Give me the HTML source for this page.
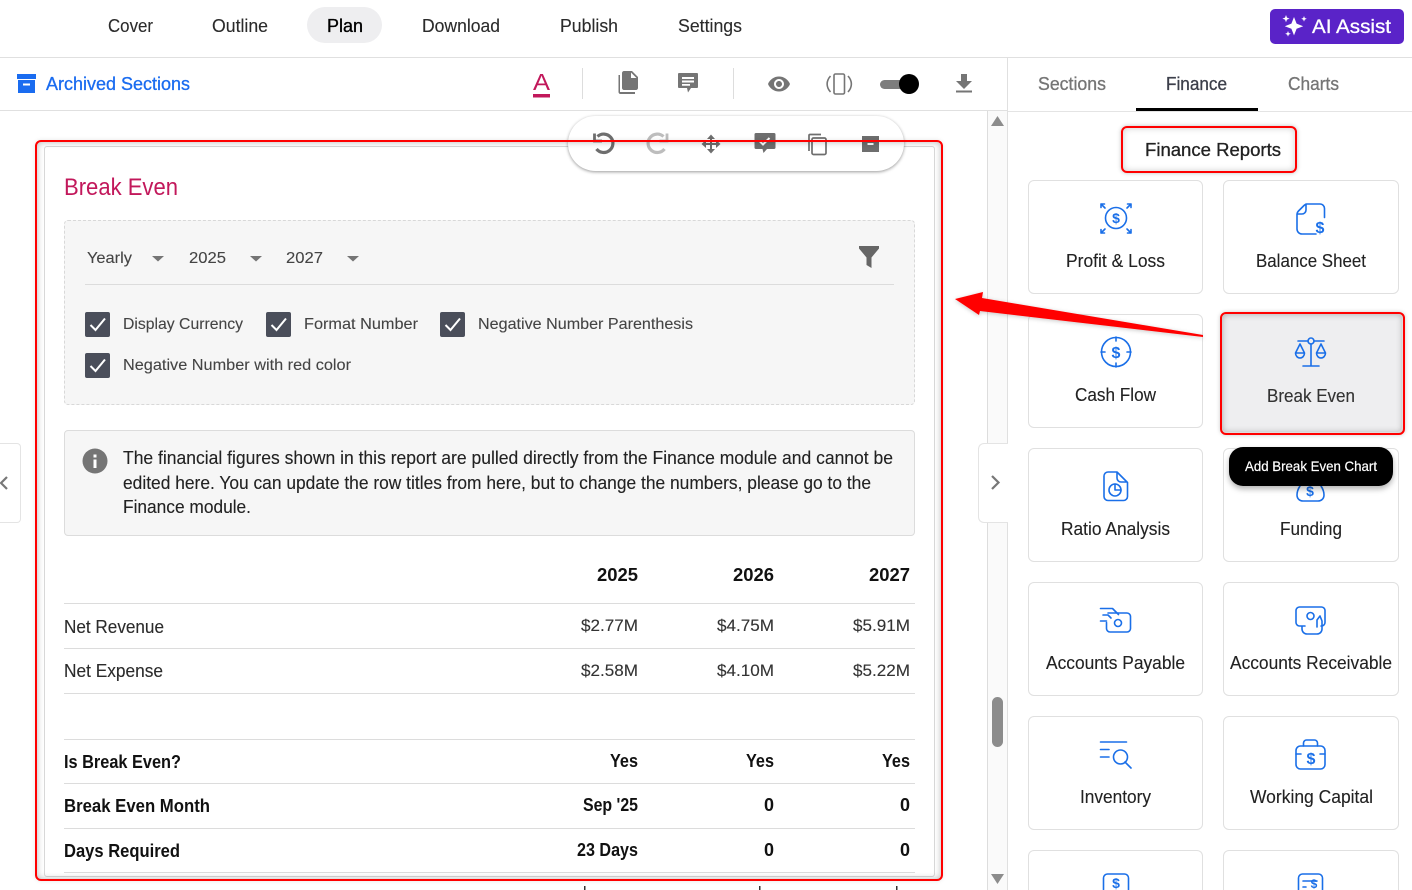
<!DOCTYPE html>
<html lang="en"><head><meta charset="utf-8"><title>Break Even</title>
<style>
html,body{margin:0;padding:0;background:#fff;width:1412px;height:890px;overflow:hidden}
#p{width:1412px;height:890px;position:relative;overflow:hidden;font-family:"Liberation Sans",Arial,sans-serif}
.b{position:absolute;box-sizing:border-box}
.card{position:absolute;box-sizing:border-box;width:175px;height:114px;border:1px solid #e0e0e0;border-radius:6px;background:#fff}
.cut{height:40px;border-bottom:none;border-radius:6px 6px 0 0}
svg{position:absolute;left:0;top:0}
text{font-family:"Liberation Sans",Arial,sans-serif;white-space:pre}
.m{stroke:currentColor;stroke-width:.3}
.ic{fill:none;stroke:#1a6fe8;stroke-width:1.6;stroke-linecap:round;stroke-linejoin:round}
.d{fill:#1a6fe8;font-weight:700;font-size:14px;text-anchor:middle}
.n{font-size:18px;fill:#2b2b2b;stroke:#2b2b2b;stroke-width:.12}
.v{font-size:17px;fill:#333;stroke:#333;stroke-width:.12}
.t{font-size:18px;font-weight:700;fill:#111}
.l{font-size:16px;fill:#444;stroke:#444;stroke-width:.1}
.c{font-size:18px;fill:#222;stroke:#222;stroke-width:.12}
.g{fill:#757575}
.r{position:absolute;box-sizing:border-box;border:2px solid #f00;border-radius:6px}
</style></head><body><div id="p">

<div class="b" style="left:0;top:57px;width:1412px;height:1px;background:#e0e0e0"></div>
<div class="b" style="left:0;top:110px;width:1008px;height:1px;background:#e0e0e0"></div>
<div class="b" style="left:1008px;top:111px;width:404px;height:1px;background:#e4e4e4"></div>
<div class="b" style="left:1007px;top:58px;width:1px;height:832px;background:#e0e0e0"></div>
<div class="b" style="left:987px;top:111px;width:20px;height:779px;background:#fafafa;border-left:1px solid #ddd"></div>
<div class="b" style="left:992px;top:697px;width:11px;height:50px;background:#8c8c8c;border-radius:6px"></div>

<div class="b" style="left:307px;top:7px;width:75px;height:36px;background:#eeeef0;border-radius:18px"></div>
<div class="b" style="left:1270px;top:9px;width:134px;height:35px;background:#5a23c8;border-radius:5px"></div>
<div class="b" style="left:1136px;top:108px;width:122px;height:3px;background:#000"></div>

<div class="b" style="left:44px;top:146px;width:891px;height:731px;background:#fff;border:1px solid #d8d8d8;border-radius:3px"></div>
<div class="b" style="left:64px;top:220px;width:851px;height:185px;background:#f6f6f6;border:1px dashed #d8d8d8;border-radius:4px"></div>
<div class="b" style="left:85px;top:284px;width:809px;height:1px;background:#dcdcdc"></div>
<div class="b" style="left:64px;top:430px;width:851px;height:106px;background:#f6f6f6;border:1px solid #dcdcdc;border-radius:4px"></div>
<div class="b" style="left:64px;top:603px;width:851px;height:1px;background:#dcdcdc"></div>
<div class="b" style="left:64px;top:648px;width:851px;height:1px;background:#dcdcdc"></div>
<div class="b" style="left:64px;top:693px;width:851px;height:1px;background:#dcdcdc"></div>
<div class="b" style="left:64px;top:739px;width:851px;height:1px;background:#dcdcdc"></div>
<div class="b" style="left:64px;top:783px;width:851px;height:1px;background:#dcdcdc"></div>
<div class="b" style="left:64px;top:828px;width:851px;height:1px;background:#dcdcdc"></div>
<div class="b" style="left:64px;top:872px;width:851px;height:1px;background:#dcdcdc"></div>

<div class="b" style="left:568px;top:116px;width:336px;height:55px;background:#fff;border-radius:28px;box-shadow:0 1px 3px rgba(0,0,0,.4)"></div>

<div class="b" style="left:0;top:443px;width:21px;height:80px;background:#fff;border:1px solid #e4e4e4;border-left:none;border-radius:0 4px 4px 0"></div>
<div class="b" style="left:978px;top:443px;width:30px;height:80px;background:#fff;border:1px solid #e4e4e4;border-right:none;border-radius:6px 0 0 6px"></div>

<div class="card" style="left:1028px;top:180px"></div>
<div class="card" style="left:1223px;top:180px;width:176px"></div>
<div class="card" style="left:1028px;top:314px"></div>
<div class="b" style="left:1222px;top:314px;width:180px;height:118px;background:#eeeef0;border-radius:5px"></div>
<div class="card" style="left:1028px;top:448px"></div>
<div class="card" style="left:1223px;top:448px;width:176px"></div>
<div class="card" style="left:1028px;top:582px"></div>
<div class="card" style="left:1223px;top:582px;width:176px"></div>
<div class="card" style="left:1028px;top:716px"></div>
<div class="card" style="left:1223px;top:716px;width:176px"></div>
<div class="card cut" style="left:1028px;top:850px"></div>
<div class="card cut" style="left:1223px;top:850px;width:176px"></div>

<svg width="1412" height="890" viewBox="0 0 1412 890" xmlns="http://www.w3.org/2000/svg">
<defs>
<filter id="sh" x="-20%" y="-50%" width="140%" height="220%"><feDropShadow dx="0" dy="3" stdDeviation="3" flood-color="#000" flood-opacity=".3"/></filter>
</defs>

<!-- top nav -->
<text class="n" x="108" y="32" textLength="45" lengthAdjust="spacingAndGlyphs">Cover</text>
<text class="n" x="212" y="32" textLength="56" lengthAdjust="spacingAndGlyphs">Outline</text>
<text class="n m" style="fill:#000;stroke:#000;stroke-width:.35" x="327" y="32" textLength="36" lengthAdjust="spacingAndGlyphs">Plan</text>
<text class="n" x="422" y="32" textLength="78" lengthAdjust="spacingAndGlyphs">Download</text>
<text class="n" x="560" y="32" textLength="58" lengthAdjust="spacingAndGlyphs">Publish</text>
<text class="n" x="678" y="32" textLength="64" lengthAdjust="spacingAndGlyphs">Settings</text>

<!-- AI assist -->
<path fill="#fff" d="M1294 17l2.6 6.6 6.6 2.6-6.6 2.600-2.600 6.600-2.600-6.600-6.600-2.600 6.600-2.600zM1286 15l1 2.600 2.600 1-2.600 1-1 2.600-1-2.600-2.600-1 2.600-1zM1304 16l.8 2 2 .8-2 .8-.8 2-.8-2-2-.8 2-.8zM1288 31l.8 2 2 .8-2 .8-.8 2-.8-2-2-.8 2-.8z"/>
<text x="1312" y="33" font-size="19" fill="#fff" class="m" style="color:#fff" textLength="79" lengthAdjust="spacingAndGlyphs">AI Assist</text>

<!-- toolbar -->
<path fill="#1a6cf0" d="M17 74h19v5H17zM18 80h17v13H18zM23 83.500v2h7v-2z" fill-rule="evenodd"/>
<text class="m" x="46" y="90" font-size="18" fill="#1a6cf0" style="color:#1a6cf0" textLength="144" lengthAdjust="spacingAndGlyphs">Archived Sections</text>
<text x="533" y="90" font-size="23" fill="#c2185b" textLength="17" lengthAdjust="spacingAndGlyphs">A</text>
<rect x="533" y="94" width="17" height="3.500" fill="#c2185b"/>
<rect x="582" y="68" width="1" height="31" fill="#ddd"/>
<rect x="733" y="68" width="1" height="31" fill="#ddd"/>
<path class="g" transform="translate(616,70)" d="M16 1H8c-1.100 0-2 .9-2 2v15c0 1.100.9 2 2 2h12c1.100 0 2-.9 2-2V7zM15 8V2.500L20.500 8zM4 5H2.500v17c0 1 .8 2 2 2H19v-2H4z"/>
<path class="g" fill-rule="evenodd" d="M679 73h18a1 1 0 011 1v13a1 1 0 01-1 1h-6l-3 4.500-1-4.500h-8a1 1 0 01-1-1V74a1 1 0 011-1zM682 77v2h12v-2zM682 80.500v2h12v-2zM682 84v1.800h8V84z"/>
<path class="g" transform="translate(767,72)" d="M12 4.500C7 4.500 2.730 7.610 1 12c1.730 4.390 6 7.500 11 7.500s9.270-3.110 11-7.500c-1.730-4.390-6-7.500-11-7.500zM12 17c-2.760 0-5-2.240-5-5s2.240-5 5-5 5 2.240 5 5-2.240 5-5 5zm0-8c-1.660 0-3 1.340-3 3s1.340 3 3 3 3-1.340 3-3-1.340-3-3-3z"/>
<g fill="none" stroke="#757575" stroke-width="1.600"><rect x="834" y="74" width="10.500" height="20" rx="1.500"/><path d="M830.500 76c-4.500 5-4.500 11 0 16M848 76c4.500 5 4.500 11 0 16"/></g>
<rect x="880" y="80" width="26" height="9" rx="4.500" fill="#7d7d7d"/>
<circle cx="909" cy="84" r="10" fill="#000"/>
<path class="g" d="M961 74h6v7h5l-8 8-8-8h5zM956 90.500h16v2h-16z"/>

<!-- tabs -->
<text class="m" x="1038" y="90" font-size="18" fill="#757575" style="color:#757575" textLength="68" lengthAdjust="spacingAndGlyphs">Sections</text>
<text class="m" x="1166" y="90" font-size="18" fill="#3c3f4a" style="color:#3c3f4a" textLength="61" lengthAdjust="spacingAndGlyphs">Finance</text>
<text class="m" x="1288" y="90" font-size="18" fill="#757575" style="color:#757575" textLength="51" lengthAdjust="spacingAndGlyphs">Charts</text>
<text class="m" x="1145" y="156" font-size="18" fill="#222" style="color:#222" textLength="136" lengthAdjust="spacingAndGlyphs">Finance Reports</text>

<!-- scrollbar arrows -->
<path d="M997.500 116l6.500 10h-13z" fill="#8c8c8c"/>
<path d="M997.500 884l-6.500-10h13z" fill="#8c8c8c"/>

<!-- side chevrons -->
<path d="M7 477l-6 6 6 6" fill="none" stroke="#777" stroke-width="2.200"/>
<path d="M992 476l6.500 6.500-6.500 6.500" fill="none" stroke="#777" stroke-width="2.200"/>

<!-- title -->
<text x="64" y="195" font-size="24" fill="#c2185b" textLength="114" lengthAdjust="spacingAndGlyphs">Break Even</text>

<!-- filters -->
<text class="l" x="87" y="263" textLength="45" lengthAdjust="spacingAndGlyphs">Yearly</text>
<text class="l" x="189" y="263" textLength="37" lengthAdjust="spacingAndGlyphs">2025</text>
<text class="l" x="286" y="263" textLength="37" lengthAdjust="spacingAndGlyphs">2027</text>
<path d="M152 256h12l-6 5.500zM250 256h12l-6 5.500zM347 256h12l-6 5.500z" fill="#757575"/>
<path d="M859 246h20v2.500l-7.500 9v10.500l-5-3v-7.500l-7.500-9z" fill="#666"/>

<g fill="#4a4e5a">
<rect x="85" y="312" width="25" height="25" rx="2"/><rect x="266" y="312" width="25" height="25" rx="2"/><rect x="440" y="312" width="25" height="25" rx="2"/><rect x="85" y="353" width="25" height="25" rx="2"/>
</g>
<g fill="none" stroke="#fff" stroke-width="2">
<path d="M90.500 325l5 5 9.500-11.500M271.500 325l5 5 9.500-11.500M445.500 325l5 5 9.500-11.500M90.500 366l5 5 9.500-11.500"/>
</g>
<text class="l" x="123" y="329" textLength="120" lengthAdjust="spacingAndGlyphs">Display Currency</text>
<text class="l" x="304" y="329" textLength="114" lengthAdjust="spacingAndGlyphs">Format Number</text>
<text class="l" x="478" y="329" textLength="215" lengthAdjust="spacingAndGlyphs">Negative Number Parenthesis</text>
<text class="l" x="123" y="370" textLength="228" lengthAdjust="spacingAndGlyphs">Negative Number with red color</text>

<!-- info -->
<circle cx="95" cy="461" r="12.500" fill="#757575"/>
<rect x="93.500" y="459.500" width="3" height="8.500" fill="#fff"/><rect x="93.500" y="454.500" width="3" height="3" fill="#fff"/>
<text class="c" x="123" y="464" textLength="770" lengthAdjust="spacingAndGlyphs">The financial figures shown in this report are pulled directly from the Finance module and cannot be</text>
<text class="c" x="123" y="489" textLength="748" lengthAdjust="spacingAndGlyphs">edited here. You can update the row titles from here, but to change the numbers, please go to the</text>
<text class="c" x="123" y="513" textLength="128" lengthAdjust="spacingAndGlyphs">Finance module.</text>

<!-- table -->
<text class="t" x="597" y="581" textLength="41" lengthAdjust="spacingAndGlyphs">2025</text>
<text class="t" x="733" y="581" textLength="41" lengthAdjust="spacingAndGlyphs">2026</text>
<text class="t" x="869" y="581" textLength="41" lengthAdjust="spacingAndGlyphs">2027</text>
<text class="n" x="64" y="633" textLength="100" lengthAdjust="spacingAndGlyphs">Net Revenue</text>
<text class="v" x="581" y="631" textLength="57" lengthAdjust="spacingAndGlyphs">$2.77M</text>
<text class="v" x="717" y="631" textLength="57" lengthAdjust="spacingAndGlyphs">$4.75M</text>
<text class="v" x="853" y="631" textLength="57" lengthAdjust="spacingAndGlyphs">$5.91M</text>
<text class="n" x="64" y="677" textLength="99" lengthAdjust="spacingAndGlyphs">Net Expense</text>
<text class="v" x="581" y="676" textLength="57" lengthAdjust="spacingAndGlyphs">$2.58M</text>
<text class="v" x="717" y="676" textLength="57" lengthAdjust="spacingAndGlyphs">$4.10M</text>
<text class="v" x="853" y="676" textLength="57" lengthAdjust="spacingAndGlyphs">$5.22M</text>
<text class="t" x="64" y="768" textLength="117" lengthAdjust="spacingAndGlyphs">Is Break Even?</text>
<text class="t" x="610" y="767" textLength="28" lengthAdjust="spacingAndGlyphs">Yes</text>
<text class="t" x="746" y="767" textLength="28" lengthAdjust="spacingAndGlyphs">Yes</text>
<text class="t" x="882" y="767" textLength="28" lengthAdjust="spacingAndGlyphs">Yes</text>
<text class="t" x="64" y="812" textLength="146" lengthAdjust="spacingAndGlyphs">Break Even Month</text>
<text class="t" x="583" y="811" textLength="55" lengthAdjust="spacingAndGlyphs">Sep '25</text>
<text class="t" x="764" y="811" textLength="10" lengthAdjust="spacingAndGlyphs">0</text>
<text class="t" x="900" y="811" textLength="10" lengthAdjust="spacingAndGlyphs">0</text>
<text class="t" x="64" y="857" textLength="116" lengthAdjust="spacingAndGlyphs">Days Required</text>
<text class="t" x="577" y="856" textLength="61" lengthAdjust="spacingAndGlyphs">23 Days</text>
<text class="t" x="764" y="856" textLength="10" lengthAdjust="spacingAndGlyphs">0</text>
<text class="t" x="900" y="856" textLength="10" lengthAdjust="spacingAndGlyphs">0</text>
<rect x="584" y="886" width="1.500" height="4" fill="#333"/><rect x="759" y="886" width="1.500" height="4" fill="#333"/><rect x="896" y="886" width="1.500" height="4" fill="#333"/>

<!-- floating toolbar icons -->
<g fill="none" stroke="#6e6e6e" stroke-width="3.200">
<path d="M597.500 136.500A9.200 9.200 0 1 1 596.500 149"/>
<path d="M594.500 133.500v7.500h7.500" stroke-width="2.800"/>
</g>
<g fill="none" stroke="#bdbdbd" stroke-width="3.200">
<path d="M663.500 136.500A9.200 9.200 0 1 0 664.500 149"/>
<path d="M667 133.500v7.500h-7.500" stroke-width="2.800"/>
</g>
<g fill="#6e6e6e">
<rect x="710" y="137" width="2" height="14"/><rect x="704" y="143" width="14" height="2"/>
<path d="M711 134.500l4 4.500h-8zM711 153.500l4-4.500h-8zM701.500 144l4.500-4v8zM720.500 144l-4.500-4v8z"/>
</g>
<path fill="#6e6e6e" fill-rule="evenodd" d="M756 133h18a1.500 1.500 0 011.500 1.500v13a1.500 1.500 0 01-1.500 1.500h-7l-3.500 4-1-4H756a1.500 1.500 0 01-1.500-1.500v-13A1.500 1.500 0 01756 133z"/>
<path d="M759.500 141l3.500 3.500 6.500-6.500" fill="none" stroke="#fff" stroke-width="2"/>
<g fill="none" stroke="#6e6e6e" stroke-width="1.700"><path d="M809 151v-15.500a1 1 0 011-1h11"/><rect x="812" y="138" width="14" height="16.500" rx="1.500"/></g>
<path fill="#6e6e6e" fill-rule="evenodd" d="M862 136h17v16h-17zM867.500 143v2h6v-2z"/>

<!-- card labels -->
<text class="c" x="1066" y="267" textLength="99" lengthAdjust="spacingAndGlyphs">Profit &amp; Loss</text>
<text class="c" x="1256" y="267" textLength="110" lengthAdjust="spacingAndGlyphs">Balance Sheet</text>
<text class="c" x="1075" y="401" textLength="81" lengthAdjust="spacingAndGlyphs">Cash Flow</text>
<text class="c" x="1267" y="402" style="fill:#333" textLength="88" lengthAdjust="spacingAndGlyphs">Break Even</text>
<text class="c" x="1061" y="535" textLength="109" lengthAdjust="spacingAndGlyphs">Ratio Analysis</text>
<text class="c" x="1280" y="535" textLength="62" lengthAdjust="spacingAndGlyphs">Funding</text>
<text class="c" x="1046" y="669" textLength="139" lengthAdjust="spacingAndGlyphs">Accounts Payable</text>
<text class="c" x="1230" y="669" textLength="162" lengthAdjust="spacingAndGlyphs">Accounts Receivable</text>
<text class="c" x="1080" y="803" textLength="71" lengthAdjust="spacingAndGlyphs">Inventory</text>
<text class="c" x="1250" y="803" textLength="123" lengthAdjust="spacingAndGlyphs">Working Capital</text>

<!-- card icons -->
<g class="ic">
<!-- profit -->
<circle cx="1116" cy="218" r="10.500"/>
<path d="M1101 204l4 4M1101 204h3.500M1101 204v3.500M1131 204l-4 4M1131 204h-3.500M1131 204v3.500M1101 233l4-4M1101 233h3.500M1101 233v-3.500M1131 233l-4-4M1131 233h-3.500M1131 233v-3.500"/>
<!-- balance -->
<path d="M1307 204h13a4.500 4.500 0 014.500 4.500v9M1307 204c-1 0-2 .5-3 1.500l-5.500 5.500c-1 1-1.500 2-1.500 3v15a5 5 0 005 5h14M1306 204v6a4 4 0 01-4 4h-5"/>
<!-- cash -->
<circle cx="1116" cy="352" r="14.500"/>
<path d="M1116 337v4M1116 363v4M1101 352h4M1127 352h4"/>
<!-- balance scale -->
<circle cx="1311" cy="341" r="3"/>
<path d="M1298 341h10M1314 341h10M1311 344v22M1303 366h16M1300 344l-4.500 9M1300 344l4.500 9M1321 344l-4.500 9M1321 344l4.500 9M1295.500 353h9a4.500 5 0 01-9 0zM1316.500 353h9a4.500 5 0 01-9 0z"/>
<!-- ratio -->
<path d="M1108 472h9l10.500 10.500v14a4 4 0 01-4 4h-15.500a4 4 0 01-4-4v-20.500a4 4 0 014-4zM1117 472v6a4 4 0 004 4h6"/>
<circle cx="1115" cy="490" r="6"/>
<path d="M1115 484v6h6"/>
<!-- funding -->
<path d="M1300 486c-2 3-3 6-3 9 0 4 3 6 6 6h15c3 0 6-2 6-6 0-3-1-6-3-9"/>
<!-- payable -->
<path d="M1108 613h19a3.500 3.500 0 013.500 3.500v12a3.500 3.500 0 01-3.500 3.500h-17a3.500 3.500 0 01-3.500-3.500v-6"/>
<circle cx="1118" cy="623" r="3.500"/>
<path d="M1100.500 608.500h12l6 6M1100.500 621h6M1103 615h5l3 3"/>
<!-- receivable -->
<path d="M1299.500 607h22a3.500 3.500 0 013.500 3.500v12a3.500 3.500 0 01-3.500 3.500h-.5M1305 626h-5.500a3.500 3.500 0 01-3.500-3.500v-12a3.500 3.500 0 013.500-3.500M1302 626v3a5 5 0 005 5h10a5 5 0 005-5v-8l-2-5-3 4v7"/>
<circle cx="1310.500" cy="616" r="3.500"/>
<!-- inventory -->
<path d="M1100.500 742h26M1100.500 749.500h8.500M1100.500 757h8.500M1125 762l6 6"/>
<circle cx="1120.500" cy="757" r="7"/>
<!-- working capital -->
<rect x="1296" y="746" width="29" height="23" rx="4.500"/>
<path d="M1303.500 746v-3a3 3 0 013-3h8a3 3 0 013 3v3M1296 754h5M1320 754h5"/>
<!-- row6 -->
<path d="M1103.500 889.500v-11.500a4 4 0 014-4h17a4 4 0 014 4v11.500"/>
<path d="M1298.500 889.500v-11.500a4 4 0 014-4h16a4 4 0 014 4v11.500"/>
<path d="M1303 881h14M1303 887h3"/>
</g>
<text class="d" x="1116" y="223">$</text>
<text class="d" x="1320" y="233" style="font-size:16px">$</text>
<text class="d" x="1116" y="358" style="font-size:16px">$</text>
<text class="d" x="1310" y="496">$</text>
<text class="d" x="1311" y="764" style="font-size:16px">$</text>
<text class="d" x="1116" y="888" style="font-size:14px">$</text>
<text class="d" x="1314" y="888" style="font-size:12px">$</text>

<!-- tooltip -->
<rect x="1229" y="447" width="164" height="39" rx="14" fill="#000" filter="url(#sh)"/>
<text x="1245" y="471" font-size="14" fill="#fff" class="m" style="color:#fff;stroke-width:.2" textLength="132" lengthAdjust="spacingAndGlyphs">Add Break Even Chart</text>
</svg>

<!-- annotation frames -->
<div class="r" style="left:35px;top:140px;width:907.500px;height:741px;box-shadow:inset 0 0 7px rgba(0,0,0,.28),0 0 4px rgba(0,0,0,.1)"></div>
<div class="r" style="left:1121px;top:126px;width:175.500px;height:46.500px;box-shadow:inset 0 0 7px rgba(0,0,0,.2),0 0 4px rgba(0,0,0,.25)"></div>
<div class="r" style="left:1220px;top:312px;width:184.500px;height:122.500px;box-shadow:inset 0 0 7px rgba(0,0,0,.3),0 0 4px rgba(0,0,0,.2)"></div>

<svg width="1412" height="890" viewBox="0 0 1412 890" xmlns="http://www.w3.org/2000/svg">
<defs><filter id="sh2" x="-5%" y="-20%" width="110%" height="160%"><feDropShadow dx="0" dy="1" stdDeviation="2" flood-color="#000" flood-opacity=".22"/></filter></defs>
<path d="M955 299L983 292 982 298 1203 335 1203 337 980 311 979 315z" fill="#f00" filter="url(#sh2)"/>
</svg>
</div></body></html>
